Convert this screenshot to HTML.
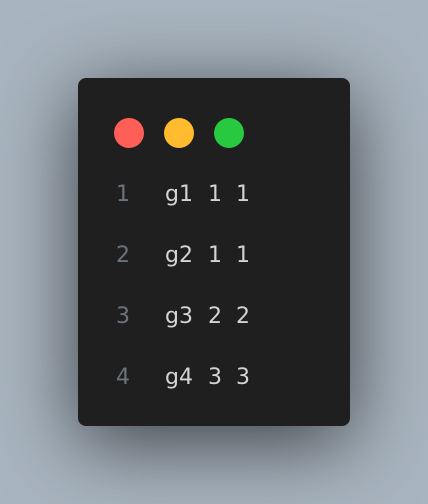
<!DOCTYPE html><html><head><style>
body{margin:0;width:428px;height:504px;background:#a8b4bf;overflow:hidden;position:relative;font-family:"DejaVu Sans",sans-serif}
.card{position:absolute;left:78px;top:78px;width:272px;height:348px;background:#1f1f1f;border-radius:8px;box-shadow:0 16px 80px rgba(0,0,0,.65)}
.d{position:absolute;width:30px;height:30px;border-radius:50%;top:118px}
.t{position:absolute;font-size:22px;line-height:22px;color:#d4d4d4}
.n{color:#6b737d}
</style></head><body>
<div class="card"></div>
<div class="d" style="left:114px;background:#ff5f57"></div>
<div class="d" style="left:164px;background:#febc2e"></div>
<div class="d" style="left:214px;background:#28c840"></div>
<div class="t n" style="left:116px;top:184px">1</div><div class="t" style="left:165px;top:184px">g1</div><div class="t" style="left:208px;top:184px">1</div><div class="t" style="left:236px;top:184px">1</div>
<div class="t n" style="left:116px;top:245px">2</div><div class="t" style="left:165px;top:245px">g2</div><div class="t" style="left:208px;top:245px">1</div><div class="t" style="left:236px;top:245px">1</div>
<div class="t n" style="left:116px;top:306px">3</div><div class="t" style="left:165px;top:306px">g3</div><div class="t" style="left:208px;top:306px">2</div><div class="t" style="left:236px;top:306px">2</div>
<div class="t n" style="left:116px;top:367px">4</div><div class="t" style="left:165px;top:367px">g4</div><div class="t" style="left:208px;top:367px">3</div><div class="t" style="left:236px;top:367px">3</div>
</body></html>
